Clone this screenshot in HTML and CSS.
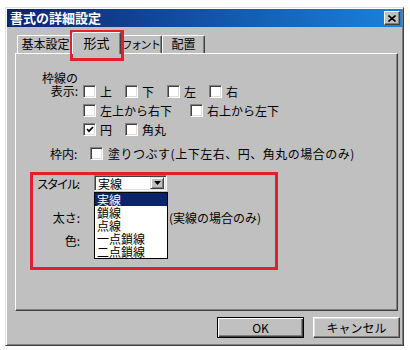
FILE: index.html
```html
<!DOCTYPE html>
<html lang="ja">

<head>
    <meta charset="UTF-8">
    <title>書式の詳細設定</title>
    <link rel="stylesheet" href="styles.css">
</head>

<body>
    <div class="screen">
        <div class="dialog">
            <div class="titlebar">
                <span class="title">書式の詳細設定</span>
                <span class="close">
                    <svg width="8" height="7" viewBox="0 0 8 7"><path d="M0.5 0.5 L7.5 6.5 M7.5 0.5 L0.5 6.5" stroke="#000" stroke-width="1.6"/></svg>
                </span>
            </div>

            <div class="tabs">
                <div class="tab tab-basic">基本設定</div>
                <div class="tab tab-shape active">形式</div>
                <div class="tab tab-font">フォント</div>
                <div class="tab tab-layout">配置</div>
            </div>

            <div class="panel">
                <!-- 枠線の表示 -->
                <div class="borders">
                    <div class="group-label">枠線の<br>表示:</div>
                    <div class="options">
                        <div class="opt-row">
                            <label class="check"><span class="box"></span>上</label>
                            <label class="check"><span class="box"></span>下</label>
                            <label class="check"><span class="box"></span>左</label>
                            <label class="check"><span class="box"></span>右</label>
                        </div>
                        <div class="opt-row">
                            <label class="check wide"><span class="box"></span>左上から右下</label>
                            <label class="check"><span class="box"></span>右上から左下</label>
                        </div>
                        <div class="opt-row">
                            <label class="check"><span class="box checked">
                                <svg width="8" height="7" viewBox="0 0 8 7"><path d="M1 3 L3 5.2 L7 1" fill="none" stroke="#000" stroke-width="1.7"/></svg>
                            </span>円</label>
                            <label class="check"><span class="box"></span>角丸</label>
                        </div>
                    </div>
                </div>

                <!-- 枠内 -->
                <div class="fill-row">
                    <span class="fill-label">枠内:</span>
                    <label class="check"><span class="box"></span>塗りつぶす(上下左右、円、角丸の場合のみ)</label>
                </div>

                <!-- 線の設定 -->
                <div class="line-fields">
                    <div class="field">
                        <span class="field-label narrow">スタイル:</span>
                        <div class="combo open">
                            <span class="combo-value">実線</span>
                            <span class="combo-btn">
                                <svg width="7" height="4" viewBox="0 0 7 4"><path d="M0 0 H7 L3.5 4 Z" fill="#000"/></svg>
                            </span>
                            <ul class="combo-list">
                                <li class="selected">実線</li>
                                <li>鎖線</li>
                                <li>点線</li>
                                <li>一点鎖線</li>
                                <li>二点鎖線</li>
                            </ul>
                        </div>
                    </div>
                    <div class="field field-width">
                        <span class="field-label">太さ:</span>
                        <div class="combo"></div>
                        <span class="note">(実線の場合のみ)</span>
                    </div>
                    <div class="field field-color">
                        <span class="field-label">色:</span>
                        <div class="combo"></div>
                    </div>
                </div>
            </div>

            <div class="footer">
                <button class="btn default">OK</button>
                <button class="btn">キャンセル</button>
            </div>
        </div>

        <!-- red annotation frames -->
        <div class="mark mark-tab"></div>
        <div class="mark mark-fields"></div>
    </div>
</body>

</html>
```

FILE: styles.css
```css
/* Global Styles */
* {
    box-sizing: border-box;
    margin: 0;
    padding: 0;
}

body {
    font-family: "Noto Sans CJK JP", "Noto Sans", sans-serif;
    font-size: 12px;
    background: #fff;
    color: #000;
}

.screen {
    position: relative;
    width: 410px;
    height: 350px;
    padding: 7px 0 0 5px;
}

/* Dialog frame */
.dialog {
    width: 399px;
    height: 339px;
    display: flex;
    flex-direction: column;
    background: #c0c0c0;
    border: 1px solid;
    border-color: #dfdfdf #404040 #404040 #dfdfdf;
    box-shadow: inset 1px 1px #fff, inset -1px -1px #808080;
    padding: 1px;
}

.titlebar {
    height: 18px;
    flex-shrink: 0;
    display: flex;
    align-items: center;
    justify-content: space-between;
    padding: 0 2px 0 3px;
    background: linear-gradient(to right, #0a2470, #1c82da);
}

.title {
    color: #fff;
    font-weight: bold;
    font-size: 13px;
    line-height: 18px;
}

.close {
    width: 16px;
    height: 14px;
    display: flex;
    align-items: center;
    justify-content: center;
    background: #c0c0c0;
    border: 1px solid;
    border-color: #fff #404040 #404040 #fff;
    box-shadow: inset -1px -1px #808080;
}

/* Tabs */
.tabs {
    height: 26px;
    flex-shrink: 0;
    display: flex;
    align-items: flex-end;
    padding-left: 10px;
}

.tab {
    height: 18px;
    line-height: 16px;
    text-align: center;
    white-space: nowrap;
    background: #c0c0c0;
    border: 1px solid;
    border-bottom: none;
    border-color: #fff #404040 #404040 #fff;
    border-radius: 2px 2px 0 0;
    box-shadow: inset -1px 0 #808080;
}

.tab-basic {
    width: 57px;
}

.tab-shape {
    width: 45px;
}

.tab-font {
    width: 43px;
    font-size: 11px;
    letter-spacing: -1.5px;
}

.tab-layout {
    width: 43px;
}

.tab.active {
    position: relative;
    z-index: 1;
    width: 49px;
    height: 22px;
    margin: 0 -2px -1px;
    line-height: 20px;
    font-size: 13px;
}

/* Panel */
.panel {
    height: 258px;
    margin: 0 4px 0 8px;
    padding: 17px 0 0 24px;
    border: 1px solid;
    border-color: #fff #404040 #404040 #fff;
    box-shadow: inset -1px -1px #808080;
}

.borders {
    display: flex;
}

.group-label {
    width: 43px;
    padding-right: 5px;
    text-align: right;
    line-height: 13px;
}

.options {
    padding-top: 11px;
}

.opt-row {
    height: 19px;
    display: flex;
    align-items: center;
}

.check {
    width: 42px;
    display: flex;
    align-items: center;
    gap: 4px;
    line-height: 13px;
    white-space: nowrap;
}

.check.wide {
    width: 107px;
}

.box {
    width: 13px;
    height: 13px;
    flex-shrink: 0;
    display: flex;
    align-items: center;
    justify-content: center;
    background: #fff;
    border: 1px solid;
    border-color: #808080 #fff #fff #808080;
    box-shadow: inset 1px 1px #404040, inset -1px -1px #dfdfdf;
}

.fill-row {
    height: 19px;
    margin-top: 5px;
    padding-left: 10px;
    display: flex;
    align-items: center;
}

.fill-label {
    width: 40px;
}

.fill-row .check {
    width: auto;
    gap: 5px;
    letter-spacing: 0.5px;
}

/* Line fields */
.line-fields {
    margin-top: 12px;
    margin-left: -14px;
}

.field {
    height: 16px;
    display: flex;
    align-items: center;
}

.field-width {
    margin-top: 18px;
}

.field-color {
    margin-top: 7px;
}

.field-label {
    width: 54px;
    text-align: right;
    white-space: nowrap;
    margin-right: 14px;
}

.field-label.narrow {
    letter-spacing: -2px;
    padding-right: 2px;
}

.combo {
    position: relative;
    width: 73px;
    height: 16px;
    display: flex;
    align-items: center;
    justify-content: space-between;
    padding: 0 2px 0 3px;
    background: #fff;
    border: 1px solid;
    border-color: #808080 #fff #fff #808080;
    box-shadow: inset 1px 1px #404040, inset -1px -1px #dfdfdf;
}

.combo-value {
    line-height: 13px;
}

.combo-btn {
    width: 14px;
    height: 12px;
    display: flex;
    align-items: center;
    justify-content: center;
    background: #c0c0c0;
    border: 1px solid;
    border-color: #dfdfdf #404040 #404040 #dfdfdf;
    box-shadow: inset 1px 1px #fff, inset -1px -1px #808080;
}

.combo-list {
    position: absolute;
    z-index: 5;
    top: 16px;
    left: -1px;
    width: 74px;
    list-style: none;
    background: #fff;
    border: 1px solid #000;
}

.combo-list li {
    height: 13px;
    line-height: 13px;
    padding-left: 2px;
}

.combo-list li.selected {
    background: #0a246a;
    color: #fff;
}

.note {
    margin-left: 2px;
}

/* Footer buttons */
.footer {
    flex: 1;
    display: flex;
    justify-content: flex-end;
    align-items: flex-start;
    gap: 9px;
    padding: 6px 2px 0 0;
}

.btn {
    width: 87px;
    height: 21px;
    font-family: inherit;
    font-size: 12px;
    line-height: 17px;
    background: #c0c0c0;
    border: 1px solid;
    border-color: #fff #404040 #404040 #fff;
    box-shadow: inset -1px -1px #808080, inset 1px 1px #dfdfdf;
}

.btn.default {
    border-color: #000;
    box-shadow: inset 1px 1px #fff, inset -1px -1px #404040, inset -2px -2px #808080;
}

/* Red annotation frames */
.mark {
    position: absolute;
    border: 3px solid #e0202a;
}

.mark-tab {
    left: 70px;
    top: 30px;
    width: 54px;
    height: 31px;
}

.mark-fields {
    left: 30px;
    top: 172px;
    width: 248px;
    height: 98px;
}
```
